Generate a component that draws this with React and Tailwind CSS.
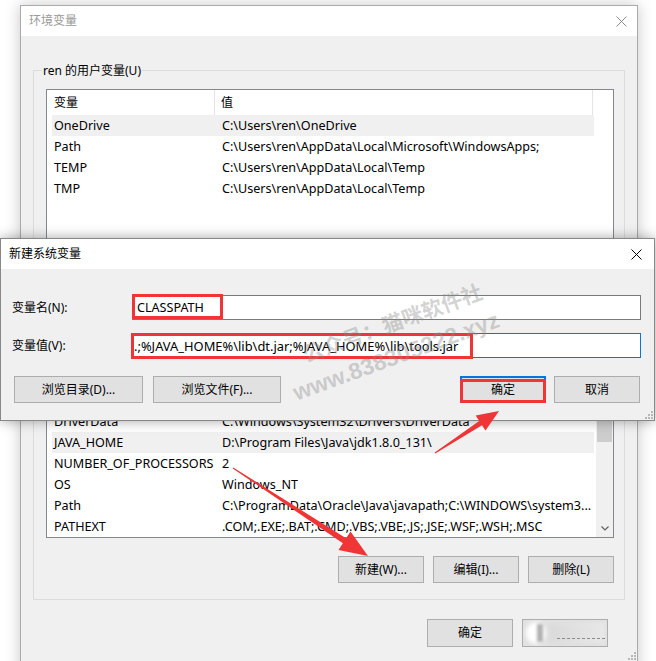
import React from 'react'

const USER_VARS = [
  ['OneDrive', 'C:\\Users\\ren\\OneDrive'],
  ['Path', 'C:\\Users\\ren\\AppData\\Local\\Microsoft\\WindowsApps;'],
  ['TEMP', 'C:\\Users\\ren\\AppData\\Local\\Temp'],
  ['TMP', 'C:\\Users\\ren\\AppData\\Local\\Temp'],
]

const SYS_VARS = [
  ['ComSpec', 'C:\\WINDOWS\\system32\\cmd.exe'],
  ['DriverData', 'C:\\Windows\\System32\\Drivers\\DriverData'],
  ['JAVA_HOME', 'D:\\Program Files\\Java\\jdk1.8.0_131\\'],
  ['NUMBER_OF_PROCESSORS', '2'],
  ['OS', 'Windows_NT'],
  ['Path', 'C:\\ProgramData\\Oracle\\Java\\javapath;C:\\WINDOWS\\system3...'],
  ['PATHEXT', '.COM;.EXE;.BAT;.CMD;.VBS;.VBE;.JS;.JSE;.WSF;.WSH;.MSC'],
]

function CloseX({ color }) {
  return (
    <svg width="11" height="11" viewBox="0 0 11 11">
      <path d="M0.5 0.5 L10.5 10.5 M10.5 0.5 L0.5 10.5" stroke={color} strokeWidth="1" />
    </svg>
  )
}

function Grip() {
  return (
    <svg width="10" height="10" viewBox="0 0 10 10">
      {[[8, 2], [5, 5], [8, 5], [2, 8], [5, 8], [8, 8]].map(([x, y], i) => (
        <rect key={i} x={x} y={y} width="2" height="2" fill="#b8b8b8" />
      ))}
    </svg>
  )
}

function Btn({ children, className = '' }) {
  return (
    <div className={`h-[27px] flex items-center justify-center bg-[#e1e1e1] border border-[#adadad] ${className}`}>
      {children}
    </div>
  )
}

function Row({ name, value, sel }) {
  return (
    <div className={`ml-[5px] w-[542px] h-[21px] shrink-0 flex items-center text-[12.6px] ${sel ? 'bg-[#f0f0f0]' : ''}`}>
      <div className="w-[163px] pl-[2px] whitespace-nowrap">{name}</div>
      <div className="pl-[7px] whitespace-nowrap overflow-hidden">{value}</div>
    </div>
  )
}

function Header() {
  return (
    <div className="flex h-[25px] shrink-0">
      <div className="w-[168px] pl-[7px] flex items-center border-r border-[#e5e5e5]">变量</div>
      <div className="w-[378px] pl-[6px] flex items-center border-r border-[#e5e5e5]">值</div>
    </div>
  )
}

export default function App() {
  return (
    <div className="relative w-[656px] h-[661px] overflow-hidden bg-white text-[12px] leading-[16px] text-black [font-family:'Noto_Sans','Noto_Sans_CJK_SC',sans-serif]">
      {/* back window: 环境变量 */}
      <div className="absolute left-[20px] top-[5px] w-[618px] h-[700px] border border-[#aaaaaa] bg-[#f0f0f0] shadow-[0_0_14px_rgba(0,0,0,0.22)] flex flex-col">
        <div className="h-[30px] shrink-0 bg-white flex items-center justify-between pl-[8px] pr-[10px]">
          <span className="text-[#999999]">环境变量</span>
          <CloseX color="#8a8a8a" />
        </div>

        <div className="relative mt-[34px] mx-[12px] border border-[#dcdcdc] pt-[18px] pl-[12px] pr-[10px] pb-[14px]">
          <span className="absolute left-[8px] -top-[8px] bg-[#f0f0f0] px-[1px]">ren 的用户变量(U)</span>
          <div className="h-[150px] border border-[#828790] bg-white flex flex-col">
            <Header />
            {USER_VARS.map((r, i) => <Row key={i} name={r[0]} value={r[1]} sel={i === 0} />)}
          </div>
          <div className="mt-[9px] flex justify-end gap-[9px]">
            <Btn className="w-[86px]">新建(N)...</Btn>
            <Btn className="w-[86px]">编辑(E)...</Btn>
            <Btn className="w-[86px]">删除(D)</Btn>
          </div>
        </div>

        <div className="relative mt-[14px] mx-[12px] border border-[#dcdcdc] pt-[18px] pl-[12px] pr-[10px] pb-[16px]">
          <span className="absolute left-[8px] -top-[8px] bg-[#f0f0f0] px-[1px]">系统变量(S)</span>
          <div className="h-[215px] border border-[#828790] bg-white flex">
            <div className="flex-1 flex flex-col overflow-hidden">
              <Header />
              <div className="flex-1 flex flex-col justify-end overflow-hidden">
                {SYS_VARS.map((r, i) => <Row key={i} name={r[0]} value={r[1]} sel={r[0] === 'JAVA_HOME'} />)}
              </div>
            </div>
            <div className="w-[17px] bg-[#f0f0f0] flex flex-col items-center">
              <div className="h-[17px] shrink-0" />
              <div className="h-[59px] shrink-0" />
              <div className="w-[15px] h-[42px] shrink-0 bg-[#cdcdcd]" />
              <div className="flex-1" />
              <div className="h-[17px] shrink-0 flex items-center justify-center">
                <svg width="8" height="5" viewBox="0 0 8 5">
                  <path d="M0.5 0.5 L4 4 L7.5 0.5" stroke="#606060" strokeWidth="1.2" fill="none" />
                </svg>
              </div>
            </div>
          </div>
          <div className="mt-[18px] flex justify-end gap-[9px]">
            <Btn className="w-[86px]">新建(W)...</Btn>
            <Btn className="w-[86px]">编辑(I)...</Btn>
            <Btn className="w-[86px]">删除(L)</Btn>
          </div>
        </div>

        <div className="mt-[19px] pr-[29px] flex justify-end gap-[9px]">
          <Btn className="w-[86px] h-[28px]">确定</Btn>
          <div className="relative w-[86px] h-[28px] bg-[#e1e1e1] border border-[#adadad] overflow-hidden">
            <div className="absolute left-[3px] top-[2px] w-[20px] h-[22px] rounded-full bg-white blur-[2px]" />
            <div className="absolute left-[14px] top-[4px] w-[6px] h-[18px] bg-[#b0b0b0] blur-[1.5px]" />
            <div className="absolute left-[26px] top-[3px] w-[56px] h-[20px] bg-gradient-to-r from-[#dadada] to-[#e8e8e8] blur-[2px]" />
            <div className="absolute left-[34px] top-[18px] w-[48px] h-[1px] border-t border-dashed border-[#8c8c8c] blur-[0.5px]" />
          </div>
        </div>
        <div className="flex justify-end pr-[1px] pt-[3px]">
          <Grip />
        </div>
      </div>

      {/* front dialog: 新建系统变量 */}
      <div className="absolute left-0 top-[238px] w-[655px] h-[183px] border border-[#888888] bg-[#f0f0f0] shadow-[0_0_12px_rgba(0,0,0,0.35)] flex flex-col">
        <div className="h-[30px] shrink-0 bg-white flex items-center justify-between pl-[8px] pr-[12px]">
          <span>新建系统变量</span>
          <CloseX color="#000000" />
        </div>
        <div className="flex flex-col pl-[11px] pr-[13px]">
          <div className="mt-[26px] flex items-center">
            <div className="w-[120px]">变量名(N):</div>
            <div className="relative flex-1 h-[25px] bg-white border border-[#7a7a7a] flex items-center pl-[4px] text-[12.6px]">
              CLASSPATH
              <div className="absolute -left-[1px] -top-[2px] w-[91px] h-[25px] border-[3px] border-[#ef3535]" />
            </div>
          </div>
          <div className="mt-[13px] flex items-center">
            <div className="w-[119px]">变量值(V):</div>
            <div className="relative flex-1 h-[25px] bg-white border border-[#0078d7] flex items-center pl-[2px] whitespace-nowrap text-[12.9px]">
              .;%JAVA_HOME%\lib\dt.jar;%JAVA_HOME%\lib\tools.jar
              <div className="absolute -left-[1px] -top-[1px] w-[342px] h-[26px] border-[3px] border-[#ef3535]" />
            </div>
          </div>
          <div className="mt-[18px] flex items-center">
            <Btn className="ml-[2px] w-[129px]">浏览目录(D)...</Btn>
            <Btn className="ml-[10px] w-[128px]">浏览文件(F)...</Btn>
            <div className="flex-1" />
            <div className="relative w-[86px] h-[27px] flex items-center justify-center bg-[#e1e1e1] border-2 border-[#0078d7]">
              确定
              <div className="absolute -left-[2px] top-[1px] w-[86px] h-[24px] border-[3px] border-[#ef3535]" />
            </div>
            <Btn className="ml-[8px] mr-[1px] w-[86px]">取消</Btn>
          </div>
        </div>
        <div className="mt-auto flex justify-end pr-[1px] pb-[1px]">
          <Grip />
        </div>
      </div>

      {/* watermark */}
      <div className="absolute left-[392px] top-[322px] -translate-x-1/2 -translate-y-1/2 -rotate-[20deg] whitespace-nowrap text-[21px] leading-[24px] font-bold text-[rgba(140,140,140,0.38)] [font-family:'Noto_Sans_CJK_SC',sans-serif]">
        公众号：猫咪软件社
      </div>
      <div className="absolute left-[396px] top-[356px] -translate-x-1/2 -translate-y-1/2 -rotate-[20deg] whitespace-nowrap text-[23px] leading-[26px] font-bold text-[rgba(140,140,140,0.38)] [font-family:'Liberation_Sans',sans-serif]">
        www.838305222.xyz
      </div>

      {/* red arrows */}
      <svg className="absolute left-0 top-0 pointer-events-none" width="656" height="661" viewBox="0 0 656 661">
        <polygon
          fill="#ef3535"
          points="435.3,453.4 482,425.2 485.5,430.6 499,411 475.7,415.6 479.2,421 434.7,452.6"
        />
        <polygon
          fill="#ef3535"
          points="232.7,468.4 342.9,543.2 338.5,549.9 368,556 350.5,531.5 346.1,538.2 233.3,467.6"
        />
      </svg>
    </div>
  )
}
